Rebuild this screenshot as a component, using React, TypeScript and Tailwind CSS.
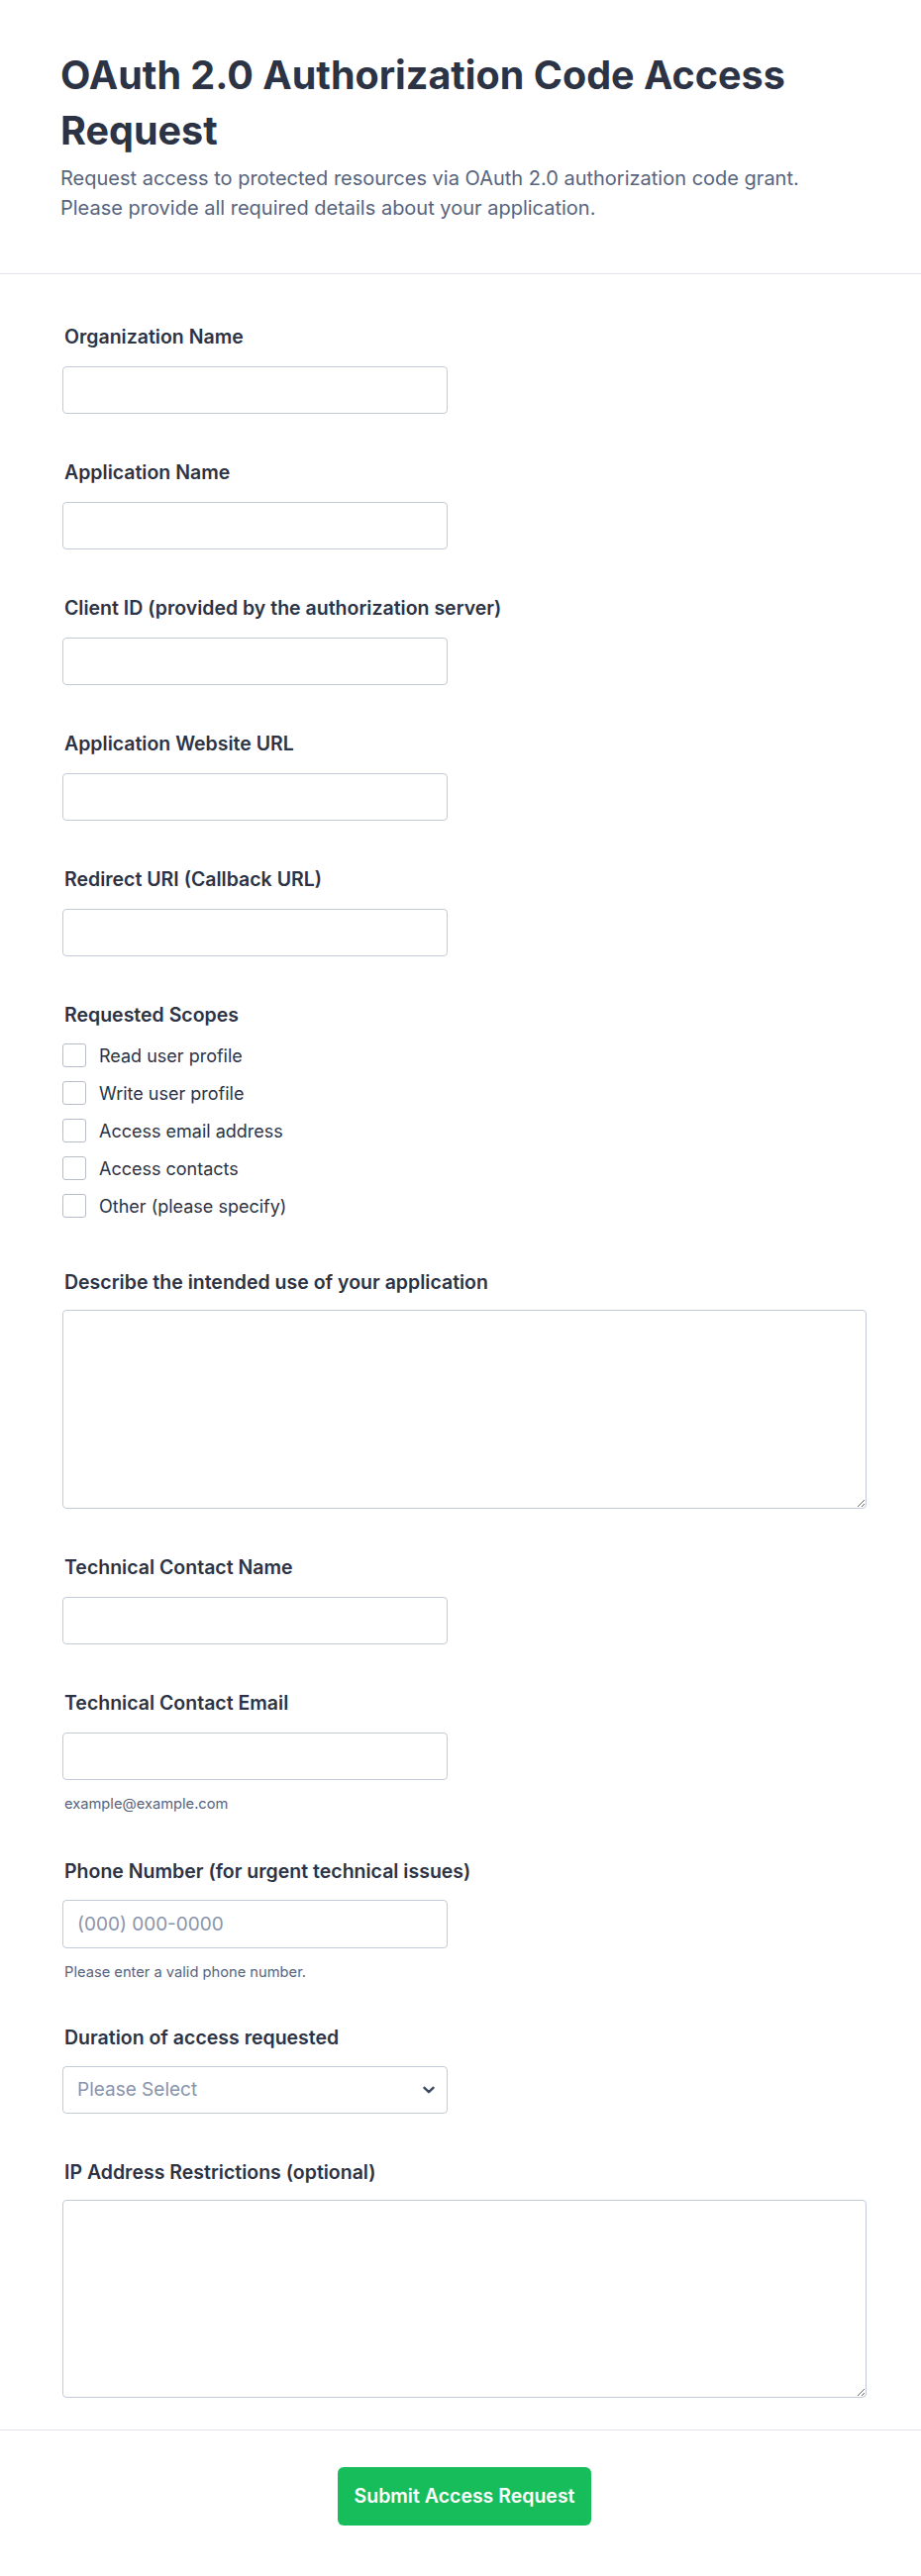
import type { ReactElement } from "react";

const scopes = [
  "Read user profile",
  "Write user profile",
  "Access email address",
  "Access contacts",
  "Other (please specify)",
];

function Label({ children }: { children: string }): ReactElement {
  return (
    <label className="block pl-[2px] text-[19.5px] leading-[24px] font-semibold text-[#2c3345]">
      {children}
    </label>
  );
}

function TextField({ label, placeholder }: { label: string; placeholder?: string }): ReactElement {
  return (
    <div className="mb-[47px]">
      <Label>{label}</Label>
      <input
        type="text"
        placeholder={placeholder}
        className="mt-[18px] block h-[48px] w-[389px] rounded-[4px] border border-[#c3cad8] bg-white px-[14px] text-[19px] text-[#2c3345] placeholder:text-[#8894ab]"
      />
    </div>
  );
}

function Helper({ children }: { children: string }): ReactElement {
  return <p className="mt-[14px] pl-[2px] text-[14.7px] leading-[20px] text-[#57647e]">{children}</p>;
}

export default function App(): ReactElement {
  return (
    <div className="min-h-[2602px] bg-white" style={{ fontFamily: "Inter, 'Noto Sans', sans-serif" }}>
      <header className="border-b border-[#e3e6ec] px-[61px] pt-[48px] pb-[51px]">
        <h1 className="text-[39.5px] leading-[56px] font-bold text-[#2c3345]">
          OAuth 2.0 Authorization Code Access Request
        </h1>
        <p className="mt-[5px] text-[20px] leading-[30px] text-[#57647e]">
          Request access to protected resources via OAuth 2.0 authorization code grant.
          <br />
          Please provide all required details about your application.
        </p>
      </header>

      <form className="border-b border-[#e3e6ec] px-[63px] pt-[51px] pb-[32px]">
        <TextField label="Organization Name" />
        <TextField label="Application Name" />
        <TextField label="Client ID (provided by the authorization server)" />
        <TextField label="Application Website URL" />
        <TextField label="Redirect URI (Callback URL)" />

        <div className="mb-[53px]">
          <Label>Requested Scopes</Label>
          <div className="mt-[17px] flex flex-col gap-[14px]">
            {scopes.map((s) => (
              <label key={s} className="flex h-[24px] items-center gap-[13px]">
                <input
                  type="checkbox"
                  className="h-[24px] w-[24px] shrink-0 appearance-none rounded-[3px] border border-[#b8bdc9] bg-white"
                />
                <span className="text-[18px] text-[#2c3345]">{s}</span>
              </label>
            ))}
          </div>
        </div>

        <div className="mb-[47px]">
          <Label>Describe the intended use of your application</Label>
          <textarea className="mt-[16px] block h-[201px] w-[812px] rounded-[4px] border border-[#c3cad8] bg-white px-[14px] py-[10px] text-[19px]" />
        </div>

        <TextField label="Technical Contact Name" />

        <div className="mb-[46px]">
          <Label>Technical Contact Email</Label>
          <input
            type="email"
            className="mt-[18px] block h-[48px] w-[389px] rounded-[4px] border border-[#c3cad8] bg-white px-[14px] text-[19px]"
          />
          <Helper>example@example.com</Helper>
        </div>

        <div className="mb-[44px]">
          <Label>Phone Number (for urgent technical issues)</Label>
          <input
            type="tel"
            placeholder="(000) 000-0000"
            className="mt-[17px] block h-[49px] w-[389px] rounded-[4px] border border-[#c3cad8] bg-white px-[14px] text-[19px] text-[#2c3345] placeholder:text-[#8894ab]"
          />
          <Helper>Please enter a valid phone number.</Helper>
        </div>

        <div className="mb-[47px]">
          <Label>Duration of access requested</Label>
          <div className="relative mt-[17px] w-[389px]">
            <select
              defaultValue=""
              className="block h-[48px] w-full appearance-none rounded-[4px] border border-[#c3cad8] bg-white px-[14px] text-[19px] text-[#8894ab]"
            >
              <option value="" disabled>
                Please Select
              </option>
              <option>1 month</option>
              <option>3 months</option>
              <option>6 months</option>
              <option>1 year</option>
            </select>
            <svg
              className="pointer-events-none absolute top-1/2 right-[13px] -translate-y-1/2"
              width="12"
              height="8"
              viewBox="0 0 12 8"
              fill="none"
              stroke="#3e4a5f"
              strokeWidth="2.4"
              strokeLinecap="round"
              strokeLinejoin="round"
            >
              <path d="M1.5 1.8 6 6.2l4.5-4.4" />
            </svg>
          </div>
        </div>

        <div>
          <Label>IP Address Restrictions (optional)</Label>
          <textarea className="mt-[16px] block h-[200px] w-[812px] rounded-[4px] border border-[#c3cad8] bg-white px-[14px] py-[10px] text-[19px]" />
        </div>
      </form>

      <footer className="flex justify-center pt-[37px] pr-[55px] pb-[50px] pl-[63px]">
        <button
          type="submit"
          className="h-[59px] rounded-[6px] bg-[#18bd5b] px-[17px] text-[19.5px] font-semibold text-white"
        >
          Submit Access Request
        </button>
      </footer>
    </div>
  );
}
